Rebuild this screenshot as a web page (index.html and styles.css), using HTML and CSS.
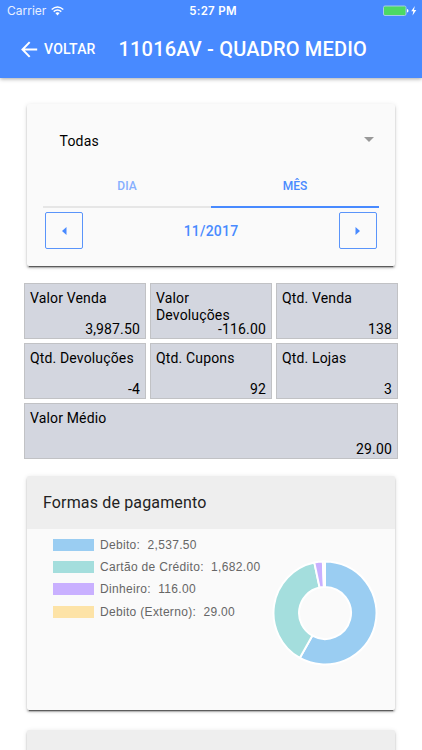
FILE: index.html
```html
<!DOCTYPE html>
<html lang="pt">
<head>
<meta charset="utf-8">
<title>11016AV - QUADRO MEDIO</title>
<link rel="stylesheet" href="styles.css">
</head>
<body>
<header class="header">
  <div class="status">
    <div class="carrier"><span>Carrier</span>
      <svg width="13" height="10" viewBox="0 0 13 10" fill="none" stroke="#fff" stroke-width="1.4"><path d="M.7 3.5Q6.5-1.7 12.3 3.5M2.7 5.6Q6.5 2.3 10.3 5.6"/><path d="M4.4 7.1Q6.5 5.5 8.6 7.1L6.5 9.4Z" fill="#fff" stroke="none"/></svg>
    </div>
    <div class="clock">5:27 PM</div>
    <div class="power">
      <svg width="34" height="12" viewBox="0 0 34 12"><rect x=".5" y="1" width="22.5" height="9.5" rx="1.5" fill="#4cd964" stroke="#a5cbe8"/><path d="M24 4Q25.5 4 25.5 5.7Q25.5 7.5 24 7.5Z" fill="#fff"/><path d="M31.8 1L28.2 6.3H30.3L29.5 10.5L33.3 5H31Z" fill="#fff"/></svg>
    </div>
  </div>
  <div class="toolbar">
    <svg class="arrow" width="17" height="17" viewBox="0 0 17 17" fill="none" stroke="#fff" stroke-width="2"><path d="M16.2 8.5H1.7M8.7 1.1L1.5 8.5L8.7 15.9"/></svg>
    <span class="back">VOLTAR</span>
    <h1 class="title">11016AV - QUADRO MEDIO</h1>
  </div>
</header>
<main>
  <section class="card filter">
    <div class="select"><span>Todas</span><i class="caret"></i></div>
    <div class="tabs"><div class="tab">DIA</div><div class="tab active">MÊS</div></div>
    <div class="period">
      <div class="step"><svg width="5" height="8" viewBox="0 0 5 8"><path d="M4.5 0V8L0 4Z" fill="#488aff"/></svg></div>
      <span>11/2017</span>
      <div class="step"><svg width="5" height="8" viewBox="0 0 5 8"><path d="M.5 0V8L5 4Z" fill="#488aff"/></svg></div>
    </div>
  </section>
  <section class="stats">
    <div class="stat"><span>Valor Venda</span><b>3,987.50</b></div>
    <div class="stat"><span>Valor Devoluções</span><b>-116.00</b></div>
    <div class="stat"><span>Qtd. Venda</span><b>138</b></div>
    <div class="stat"><span>Qtd. Devoluções</span><b>-4</b></div>
    <div class="stat"><span>Qtd. Cupons</span><b>92</b></div>
    <div class="stat"><span>Qtd. Lojas</span><b>3</b></div>
    <div class="stat wide"><span>Valor Médio</span><b>29.00</b></div>
  </section>
  <section class="card payments">
    <h2 class="card-title">Formas de pagamento</h2>
    <div class="chart">
      <ul class="legend">
        <li><i class="blue"></i>Debito:&nbsp; 2,537.50</li>
        <li><i class="teal"></i>Cartão de Crédito:&nbsp; 1,682.00</li>
        <li><i class="purple"></i>Dinheiro:&nbsp; 116.00</li>
        <li><i class="yellow"></i>Debito (Externo):&nbsp; 29.00</li>
      </ul>
      <svg class="donut" width="106" height="106" viewBox="-53 -53 106 106" stroke="#fff" stroke-width="2">
        <path fill="#9acdf2" d="M0-51.5A51.5 51.5 0 1 1-25.2 44.9L-12.7 22.7A26 26 0 1 0 0-26Z"/>
        <path fill="#a4dedd" d="M-25.2 44.9A51.5 51.5 0 0 1-10.67-50.4L-5.38-25.4A26 26 0 0 0-12.7 22.7Z"/>
        <path fill="#c9b0ff" d="M-10.67-50.4A51.5 51.5 0 0 1-2.16-51.45L-1.09-25.98A26 26 0 0 0-5.38-25.4Z"/>
        <path fill="#fde3a7" d="M-2.16-51.45A51.5 51.5 0 0 1 0-51.5V-26A26 26 0 0 0-1.09-25.98Z"/>
      </svg>
    </div>
  </section>
  <section class="card next"></section>
</main>
</body>
</html>
```
FILE: styles.css
```css
* { box-sizing: border-box; }
body { margin: 0; height: 750px; overflow: hidden; background: #fff; font-family: Roboto, sans-serif; color: #000; }
.header { position: relative; height: 77.5px; background: #488aff; color: #fff; box-shadow: 0 1px 4px rgba(0,0,0,.35); }
.status { height: 22px; display: grid; grid-template-columns: 1fr auto 1fr; align-items: center; padding: 0 5px 0 7px; font: 12px/22px Inter, sans-serif; }
.carrier { display: flex; align-items: center; gap: 5px; color: #e8f0ff; letter-spacing: 0; }
.clock { font-weight: 600; font-size: 11.5px; letter-spacing: .3px; padding-left: 2px; }
.power { display: flex; justify-content: flex-end; }
.toolbar { height: 54px; display: flex; align-items: center; padding-left: 21px; }
.back { font-size: 14px; font-weight: 500; margin: -1px 0 0 6px; letter-spacing: .2px; width: 52px; white-space: nowrap; }
.title { margin: 0 0 0 22.5px; font-size: 20px; font-weight: 500; letter-spacing: .18px; white-space: nowrap; }
main { height: 672.5px; overflow: hidden; padding-top: 26.5px; }
.card { margin: 0 27px; width: 368px; background: #fafafa; border-radius: 2px; box-shadow: 0 2px 2px 0 rgba(0,0,0,.24), 0 3px 1px -2px rgba(0,0,0,.5), 0 1px 5px 0 rgba(0,0,0,.12); }
.filter { height: 162px; padding: 15px 16px 0; }
.select { height: 43px; padding: 0 5px 0 16.5px; display: flex; align-items: center; justify-content: space-between; font-size: 14px; letter-spacing: .2px; }
.caret { border: 5px solid transparent; border-top-color: #999; border-bottom: 0; margin-top: -2px; }
.tabs { display: grid; grid-template-columns: 1fr 1fr; height: 46px; padding-top: 0; font-size: 12px; font-weight: 500; line-height: 48px; text-align: center; color: #488aff; }
.tab { height: 46px; border-bottom: 2px solid #e6e6e6; color: #86afff; }
.tab.active { border-color: #488aff; color: #488aff; }
.period { display: flex; justify-content: space-between; align-items: center; padding: 4px 2px 0; color: #488aff; font-size: 14px; font-weight: 500; letter-spacing: .2px; }
.step { width: 38px; height: 37px; border: 1px solid #5a94fa; border-radius: 2px; display: flex; align-items: center; justify-content: center; }
.filter .select { height: 43px; }
.filter .tabs, .filter .tab { height: 46px; }
.stats { margin: 17px 24px 0; width: 374px; display: grid; grid-template-columns: repeat(3, 1fr); grid-auto-rows: 56px; gap: 4px; }
.stat { position: relative; border: 1px solid #c1c2c5; background: #d3d6df; padding: 6px 5px; font-size: 14px; line-height: 17px; letter-spacing: .15px; }
.stat b { position: absolute; right: 5px; bottom: 0; font-weight: 400; }
.wide { grid-column: 1 / 4; }
.payments { margin-top: 17px; height: 234px; }
.card-title { margin: 0; height: 52.5px; padding-left: 16px; background: #eee; border-radius: 2px 2px 0 0; font-size: 16px; line-height: 54px; font-weight: 400; letter-spacing: .15px; color: #222; }
.chart { display: flex; }
.legend { width: 219px; margin: 0; padding: 5px 0 0 26px; list-style: none; font: 12px/22.4px "Liberation Sans", Arial, sans-serif; letter-spacing: .32px; color: #666; white-space: nowrap; }
.legend li { display: flex; align-items: center; height: 22.4px; }
.legend i { flex: none; width: 41px; height: 12px; margin-right: 6px; }
.blue { background: #9acdf2; }
.teal { background: #a4dedd; }
.purple { background: #c9b0ff; }
.yellow { background: #fde3a7; }
.donut { flex: none; margin: 31px 0 0 26.4px; }
.next { margin-top: 20px; height: 60px; background: #eee; }
```
